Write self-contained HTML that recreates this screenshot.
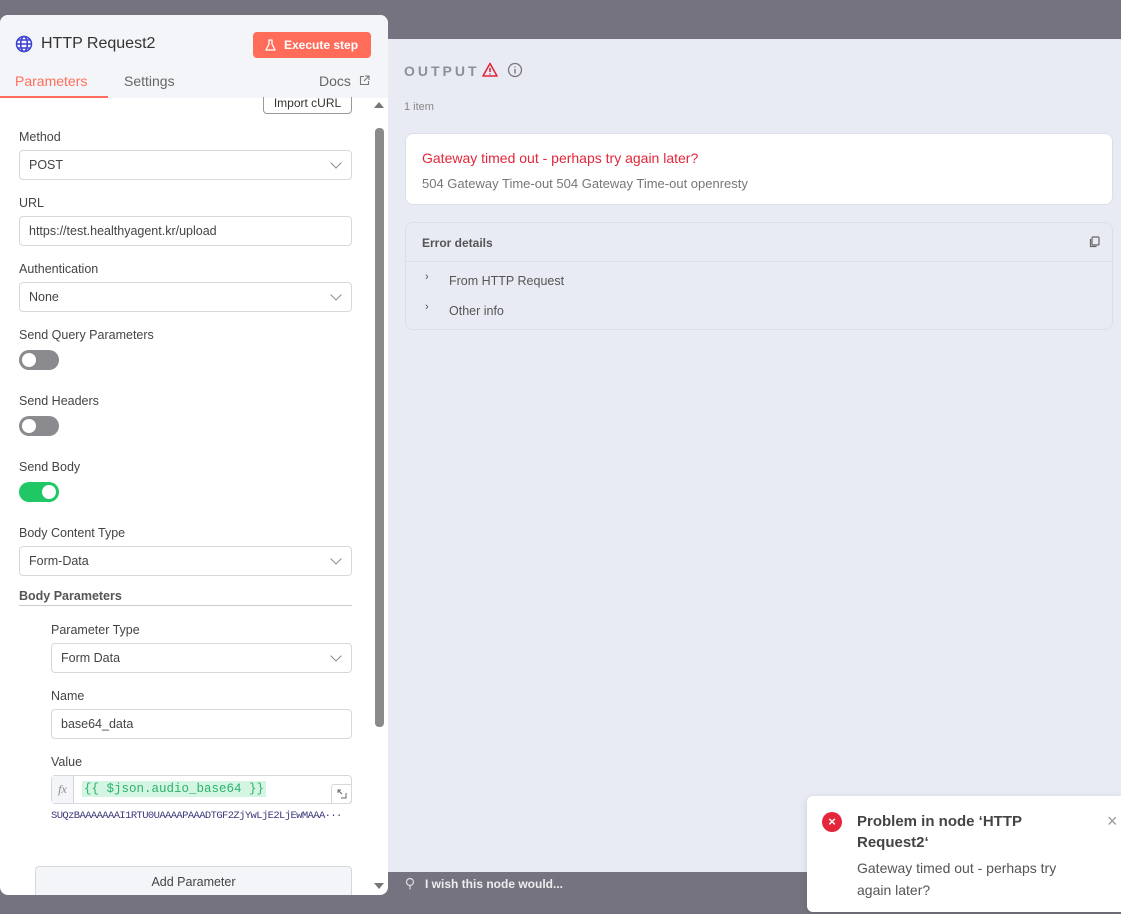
<!DOCTYPE html>
<html><head><meta charset="utf-8"><style>
*{box-sizing:border-box;margin:0;padding:0}
body{width:1121px;height:914px;background:#74737f;font-family:"Liberation Sans",sans-serif;position:relative;overflow:hidden;color:#444}
.out{position:absolute;left:380px;top:39px;width:741px;height:833px;background:#e8ebf3}
.left{position:absolute;left:0;top:15px;width:388px;height:880px;background:#fff;border-radius:8px;overflow:hidden}
.hdr{height:83px;background:#f4f5f9;position:relative}
.abs{position:absolute}
.lbl{position:absolute;left:19px;font-size:12.5px;color:#444}
.sel{position:absolute;left:19px;width:333px;height:30px;border:1px solid #d6d8de;border-radius:4px;font-size:12.5px;padding-left:9px;line-height:28px;color:#444;background:#fff}
.sel.dd:after{content:"";position:absolute;right:11px;top:8px;width:7px;height:7px;border-right:1px solid #888;border-bottom:1px solid #888;transform:rotate(45deg)}
.tg{position:absolute;left:19px;width:40px;height:20px;border-radius:10px;background:#8b8b8f}
.tg:after{content:"";position:absolute;left:3px;top:3px;width:14px;height:14px;border-radius:50%;background:#fff}
.tg.on{background:#1fc865}.tg.on:after{left:23px}
</style></head><body>
<div class="out">
 <div class="abs" style="left:24px;top:24px;font-size:14px;font-weight:bold;letter-spacing:3px;color:#8d8f99">OUTPUT</div>
 <svg class="abs" style="left:102px;top:23px" width="16" height="16" viewBox="0 0 16 16"><path d="M8 1.5L15 14H1z" fill="none" stroke="#e3263b" stroke-width="1.6" stroke-linejoin="round"/><path d="M8 6v4M8 11.5v1" stroke="#e3263b" stroke-width="1.6"/></svg>
 <svg class="abs" style="left:127px;top:23px" width="16" height="16" viewBox="0 0 16 16"><circle cx="8" cy="8" r="6.5" fill="none" stroke="#777" stroke-width="1.3"/><path d="M8 7v4.5M8 4.5v1" stroke="#777" stroke-width="1.4"/></svg>
 <div class="abs" style="left:24px;top:62px;font-size:11px;color:#888">1 item</div>
 <div class="abs" style="left:25px;top:94px;width:708px;height:72px;background:#fff;border:1px solid #dcdfe6;border-radius:8px">
  <div class="abs" style="left:16px;top:16px;font-size:14px;color:#e3263b">Gateway timed out - perhaps try again later?</div>
  <div class="abs" style="left:16px;top:42px;font-size:13px;color:#777">504 Gateway Time-out 504 Gateway Time-out openresty</div>
 </div>
 <div class="abs" style="left:25px;top:183px;width:708px;height:108px;border:1px solid #dcdfe6;border-radius:8px">
  <div class="abs" style="left:16px;top:13px;font-size:12px;font-weight:bold;color:#555">Error details</div>
  <svg class="abs" style="left:683px;top:13px" width="11" height="12" viewBox="0 0 11 12"><rect x="3" y="1" width="7" height="8" rx="1" fill="none" stroke="#666" stroke-width="1.2"/><path d="M1.5 3v7.5h6" fill="none" stroke="#666" stroke-width="1.2"/></svg>
  <div class="abs" style="left:0;top:38px;width:706px;border-top:1px solid #dcdfe6"></div>
  <div class="abs" style="left:19px;top:48px;font-size:11px;color:#555">›</div>
  <div class="abs" style="left:43px;top:51px;font-size:12.5px;color:#555">From HTTP Request</div>
  <div class="abs" style="left:19px;top:78px;font-size:11px;color:#555">›</div>
  <div class="abs" style="left:43px;top:81px;font-size:12.5px;color:#555">Other info</div>
 </div>
</div>
<svg class="abs" style="left:405px;top:877px" width="10" height="14" viewBox="0 0 10 14" fill="none" stroke="#ddd" stroke-width="1.2"><circle cx="5" cy="5" r="3.5"/><path d="M5 8.5v4"/></svg>
<div class="abs" style="left:425px;top:877px;font-size:12px;font-weight:bold;color:#eee">I wish this node would...</div>

<div class="left">
 <div class="hdr">
  <svg class="abs" style="left:15px;top:20px" width="18" height="18" viewBox="0 0 18 18" fill="none" stroke="#3b3fd0" stroke-width="1.5"><circle cx="9" cy="9" r="7.5"/><ellipse cx="9" cy="9" rx="3.3" ry="7.5"/><path d="M1.5 9h15M2.8 5h12.4M2.8 13h12.4"/></svg>
  <div class="abs" style="left:41px;top:20px;font-size:16px;color:#333">HTTP Request2</div>
  <div class="abs" style="left:253px;top:17px;width:118px;height:26px;background:#ff6d5a;border-radius:4px;color:#fff;font-size:12px;font-weight:bold;line-height:26px;padding-left:31px">Execute step</div>
  <svg class="abs" style="left:265px;top:24px" width="11" height="12" viewBox="0 0 11 12" fill="none" stroke="#fff" stroke-width="1.3" stroke-linejoin="round"><path d="M3.5 1h4M4 1v4L1 11h9L7 5V1"/></svg>
  <div class="abs" style="left:15px;top:58px;font-size:14px;color:#ff6d5a">Parameters</div>
  <div class="abs" style="left:0;top:81px;width:108px;height:2px;background:#ff6d5a"></div>
  <div class="abs" style="left:124px;top:58px;font-size:14px;color:#666">Settings</div>
  <div class="abs" style="left:319px;top:58px;font-size:14px;color:#666">Docs</div>
  <svg class="abs" style="left:359px;top:60px" width="11" height="11" viewBox="0 0 11 11" fill="none" stroke="#777" stroke-width="1.1"><path d="M5 1.5H1.5v8h8V6M6 1h4v4M10 1L5 6"/></svg>
 </div>
 <div class="abs" style="left:263px;top:82px;width:89px;height:17px;border:1px solid #999;border-top:none;border-radius:0 0 4px 4px;font-size:12px;text-align:center;line-height:13px;color:#333">Import cURL</div>
 <div class="abs" style="left:374px;top:87px;width:0;height:0;border:5px solid transparent;border-bottom:6px solid #777;border-top:0"></div>
 <div class="abs" style="left:375px;top:113px;width:9px;height:599px;background:#8a8a8a;border-radius:4px"></div>
 <div class="abs" style="left:374px;top:868px;width:0;height:0;border:5px solid transparent;border-top:6px solid #777;border-bottom:0"></div>

 <div class="lbl" style="top:115px">Method</div>
 <div class="sel dd" style="top:135px">POST</div>
 <div class="lbl" style="top:181px">URL</div>
 <div class="sel" style="top:201px">https://test.healthyagent.kr/upload</div>
 <div class="lbl" style="top:247px">Authentication</div>
 <div class="sel dd" style="top:267px">None</div>
 <div class="lbl" style="top:313px">Send Query Parameters</div>
 <div class="tg" style="top:335px"></div>
 <div class="lbl" style="top:379px">Send Headers</div>
 <div class="tg" style="top:401px"></div>
 <div class="lbl" style="top:445px">Send Body</div>
 <div class="tg on" style="top:467px"></div>
 <div class="lbl" style="top:511px">Body Content Type</div>
 <div class="sel dd" style="top:531px">Form-Data</div>
 <div class="lbl" style="top:574px;font-weight:bold;color:#555">Body Parameters</div>
 <div class="abs" style="left:19px;top:590px;width:333px;border-top:1px solid #ccc"></div>
 <div class="lbl" style="left:51px;top:608px">Parameter Type</div>
 <div class="sel dd" style="left:51px;width:301px;top:628px">Form Data</div>
 <div class="lbl" style="left:51px;top:674px">Name</div>
 <div class="sel" style="left:51px;width:301px;top:694px">base64_data</div>
 <div class="lbl" style="left:51px;top:740px">Value</div>
 <div class="abs" style="left:51px;top:760px;width:301px;height:29px;border:1px solid #d6d8de;border-radius:4px">
  <div class="abs" style="left:0;top:0;width:22px;height:27px;background:#f4f5f8;border-right:1px solid #d6d8de;font-family:'Liberation Serif',serif;font-style:italic;font-size:12px;color:#888;line-height:27px;text-align:center">fx</div>
  <div class="abs" style="left:30px;top:5px;height:16px;background:#d5f5e3;color:#2bb36c;font-family:'Liberation Mono',monospace;font-size:12.5px;line-height:16px;padding:0 2px">{{ $json.audio_base64 }}</div>
  <div class="abs" style="left:279px;top:8px;width:21px;height:20px;border:1px solid #d6d8de;border-radius:3px 0 3px 0"><svg style="position:absolute;left:5px;top:4px" width="10" height="10" viewBox="0 0 10 10" fill="none" stroke="#666" stroke-width="1"><path d="M1 4V1h3M1 1l4 4M4 9h5V4"/></svg></div>
 </div>
 <div class="abs" style="left:51px;top:795px;font-family:'Liberation Mono',monospace;font-size:10.5px;color:#3d3a7a;letter-spacing:-0.6px;white-space:nowrap">SUQzBAAAAAAAI1RTU0UAAAAPAAADTGF2ZjYwLjE2LjEwMAAA···</div>
 <div class="abs" style="left:35px;top:851px;width:317px;height:32px;border:1px solid #d6d8de;border-radius:4px;background:#f4f5f8;font-size:12.5px;color:#444;text-align:center;line-height:30px">Add Parameter</div>
</div>

<div class="abs" style="left:807px;top:796px;width:314px;height:116px;background:#fff;border-radius:6px 0 0 6px;box-shadow:0 2px 8px rgba(0,0,0,.12)">
 <div class="abs" style="left:15px;top:16px;width:20px;height:20px;border-radius:50%;background:#e3263b;color:#fff;font-size:13px;font-weight:bold;text-align:center;line-height:20px">×</div>
 <div class="abs" style="left:50px;top:15px;font-size:15px;font-weight:bold;color:#444;line-height:21px">Problem in node ‘HTTP<br>Request2‘</div>
 <div class="abs" style="left:50px;top:61px;font-size:14px;color:#555;line-height:22px">Gateway timed out - perhaps try<br>again later?</div>
 <div class="abs" style="left:300px;top:15px;font-size:18px;color:#999">×</div>
</div>
</body></html>
